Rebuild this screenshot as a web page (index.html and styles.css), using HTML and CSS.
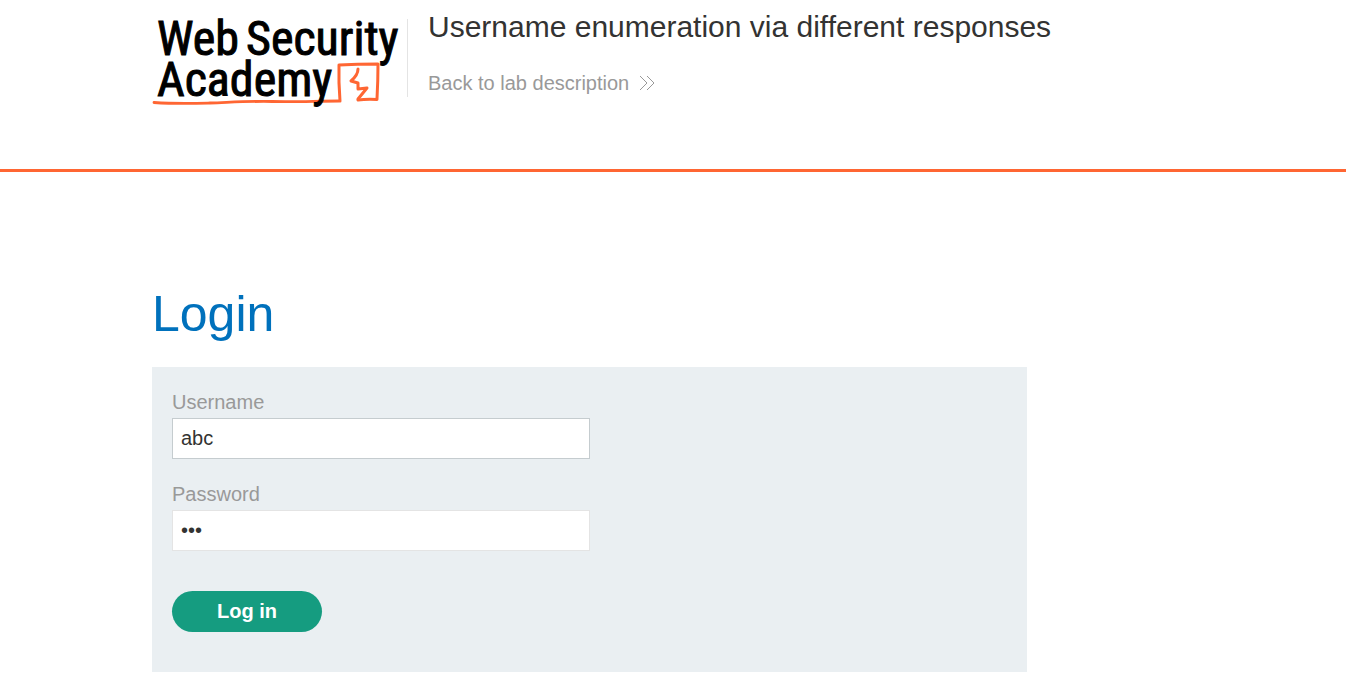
FILE: index.html
```html
<!DOCTYPE html>
<html lang="en">
<head>
<meta charset="utf-8">
<meta name="viewport" content="width=device-width, initial-scale=1">
<title>Username enumeration via different responses</title>
<link rel="stylesheet" href="styles.css">
</head>
<body>
<header class="lab-header">
  <div class="container header-row">
    <svg class="logo" viewBox="0 0 256 112" width="256" height="112" role="img" aria-label="Web Security Academy">
      <g class="logo-mark">
        <path d="M2 102.500C25 104 40 103.500 58 103C85 102 100 101 120 101.500C145 102 165 101 187 101" stroke-width="2.800"/>
        <path d="M188 101Q186.500 82 187 65M187 65Q205 64 226 64M226 64Q226 80 225 99M225 99.500Q214 99 206 100" stroke-width="3"/>
        <path d="M206 69Q206 75 199 81L206 83L206 89L215 88L206 99" stroke-width="3"/>
      </g>
      <g class="logo-text">
        <text x="5" y="55">Web</text>
        <text x="94" y="55">Security</text>
        <text x="5" y="96">Academy</text>
      </g>
    </svg>
    <div class="title-block">
      <h2 class="lab-title">Username enumeration via different responses</h2>
      <a class="back-link" href="#">Back to lab description
        <svg class="chevrons" viewBox="0 0 16 16" width="16" height="16" aria-hidden="true"><path d="M1 1L8 8L1 15M8 1L15 8L8 15"/></svg>
      </a>
    </div>
  </div>
</header>
<main class="container login">
  <h1 class="login-title">Login</h1>
  <form class="login-form">
    <label class="field-label" for="username">Username</label>
    <input class="field active" id="username" type="text" value="abc">
    <label class="field-label" for="password">Password</label>
    <input class="field" id="password" type="password" value="abc">
    <button class="button" type="button">Log in</button>
  </form>
</main>
</body>
</html>
```
FILE: styles.css
```css
* { box-sizing: border-box; }
body {
  margin: 0;
  background: #fff;
  color: #333332;
  font: 20px/24px "Liberation Sans", Arial, sans-serif;
}
.container {
  max-width: 1082px;
  margin: 0 auto;
  padding: 0 20px;
}
.lab-header { border-bottom: 3px solid #ff6633; }
.header-row {
  display: flex;
  padding-bottom: 57px;
}
.logo { flex: none; display: block; overflow: visible; }
.logo-mark path {
  fill: none;
  stroke: #ff6633;
  stroke-linecap: round;
  stroke-linejoin: round;
}
.logo-text {
  font-family: "Roboto Condensed", Roboto, sans-serif;
  font-size: 48px;
  fill: #000;
  stroke: #000;
  stroke-width: 1px;
}
.title-block {
  position: relative;
  padding-left: 20px;
}
.title-block::before {
  content: "";
  position: absolute;
  left: -1px;
  top: 19px;
  width: 1px;
  height: 78px;
  background: #e4e4e4;
}
.lab-title {
  margin: 8px 0 25px;
  font-size: 30px;
  line-height: 38px;
  font-weight: 400;
}
.back-link {
  display: flex;
  align-items: center;
  gap: 10px;
  color: #999;
  text-decoration: none;
}
.chevrons { fill: none; stroke: #999; stroke-width: 1px; }
.login { padding-top: 114px; }
.login-title {
  margin: 0 0 24px;
  color: #0071bc;
  font-size: 50px;
  line-height: 57px;
  font-weight: 400;
}
.login-form {
  width: 84%;
  padding: 23px 20px 40px;
  background: #eaeff2;
}
.field-label {
  display: block;
  margin-bottom: 4px;
  color: #999;
}
.field {
  display: block;
  width: 50%;
  height: 41px;
  margin: 0 0 23px;
  padding: 0 8px;
  border: 1px solid #e4e4e4;
  border-radius: 0;
  background: #fff;
  color: #333332;
  font: inherit;
}
.field.active { border-color: #c5cccf; }
.button {
  min-width: 150px;
  height: 41px;
  margin-top: 17px;
  padding: 0 40px 2px;
  border: 0;
  border-radius: 21px;
  background: #159c80;
  color: #fff;
  font: inherit;
  font-weight: 700;
}
```
